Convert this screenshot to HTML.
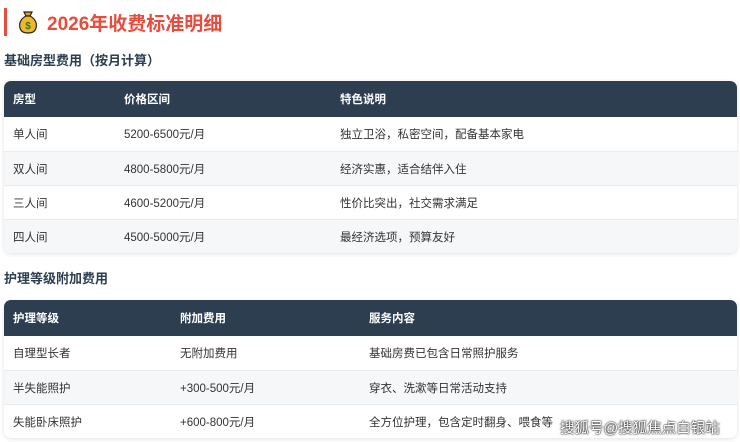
<!DOCTYPE html>
<html><head><meta charset="utf-8"><style>
*{margin:0;padding:0;box-sizing:border-box}
body{width:740px;height:442px;background:#fff;font-family:"Liberation Sans","Noto Sans CJK SC",sans-serif;color:#333;position:relative;overflow:hidden}
.title{position:absolute;left:4px;top:8px;height:28px;border-left:3px solid #e74c3c;padding-left:11px;display:flex;align-items:center;font-size:19px;font-weight:bold;color:#e74c3c}
.h3{position:absolute;left:4px;font-size:13px;font-weight:bold;color:#2c3e50}
.tbl{position:absolute;left:4px;width:733px;border-radius:7px;overflow:hidden;box-shadow:0 1px 4px rgba(0,0,0,.12)}
.row{display:flex;height:34px;align-items:center;font-size:11.5px;color:#333;border-top:1px solid #e8ebef;position:relative}
.row span{position:absolute}
.hd{height:36px;background:#2c3e50;color:#fff;font-weight:bold;border:none}
.alt{background:#f6f7f9}
.wm{position:absolute;left:560px;top:417px;font-size:14.5px;color:#fff;text-shadow:0 0 2px #000,0 0 1px #000;white-space:nowrap}
</style></head><body>
<div class="title"><svg width="20" height="24" viewBox="0 0 20 24" style="margin-right:9px"><path d="M6 2h8l-2 4h-4z" fill="#e0a21a" stroke="#222" stroke-width="1.2"/><path d="M8 6C2 9 1 14 2 18c1 4 5 5 8 5s7-1 8-5c1-4 0-9-6-12z" fill="#f2b62a" stroke="#222" stroke-width="1.2"/><text x="10" y="19" font-size="10" text-anchor="middle" fill="#2a7a2a" font-weight="bold" font-family="Liberation Sans">$</text></svg>2026年收费标准明细</div>
<div class="h3" style="top:50px">基础房型费用（按月计算）</div>
<div class="tbl" style="top:81px">
<div class="row hd"><span style="left:9px">房型</span><span style="left:120px">价格区间</span><span style="left:336px">特色说明</span></div>
<div class="row" style="border:none"><span style="left:9px">单人间</span><span style="left:120px">5200-6500元/月</span><span style="left:336px">独立卫浴，私密空间，配备基本家电</span></div>
<div class="row alt"><span style="left:9px">双人间</span><span style="left:120px">4800-5800元/月</span><span style="left:336px">经济实惠，适合结伴入住</span></div>
<div class="row"><span style="left:9px">三人间</span><span style="left:120px">4600-5200元/月</span><span style="left:336px">性价比突出，社交需求满足</span></div>
<div class="row alt"><span style="left:9px">四人间</span><span style="left:120px">4500-5000元/月</span><span style="left:336px">最经济选项，预算友好</span></div>
</div>
<div class="h3" style="top:268px">护理等级附加费用</div>
<div class="tbl" style="top:300px">
<div class="row hd"><span style="left:9px">护理等级</span><span style="left:176px">附加费用</span><span style="left:365px">服务内容</span></div>
<div class="row" style="border:none"><span style="left:9px">自理型长者</span><span style="left:176px">无附加费用</span><span style="left:365px">基础房费已包含日常照护服务</span></div>
<div class="row alt"><span style="left:9px">半失能照护</span><span style="left:176px">+300-500元/月</span><span style="left:365px">穿衣、洗漱等日常活动支持</span></div>
<div class="row"><span style="left:9px">失能卧床照护</span><span style="left:176px">+600-800元/月</span><span style="left:365px">全方位护理，包含定时翻身、喂食等</span></div>
</div>
<div class="wm">搜狐号@搜狐焦点白银站</div>
</body></html>
